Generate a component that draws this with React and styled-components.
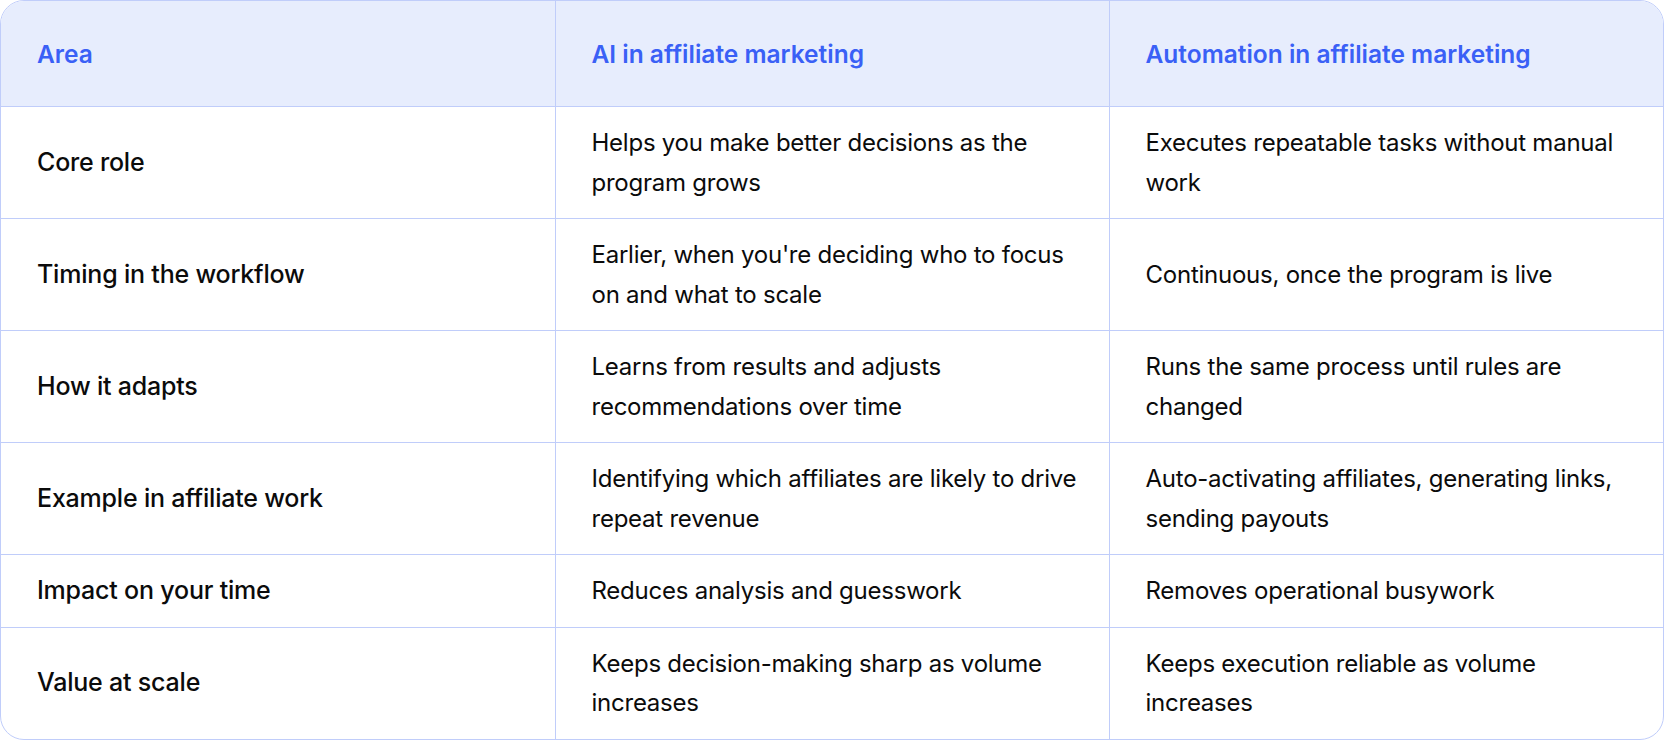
import React from "react";
import styled, { createGlobalStyle } from "styled-components";

const Global = createGlobalStyle`
  html, body { margin: 0; padding: 0; background: #ffffff; }
  body { font-family: Inter, "Noto Sans", sans-serif; -webkit-font-smoothing: antialiased; }
`;

const Frame = styled.div`
  border: 1px solid #c0cdfa;
  border-radius: 24px;
  overflow: hidden;
  background: #ffffff;
`;

const Table = styled.table`
  width: 100%;
  border-collapse: collapse;
  table-layout: fixed;
`;

const HeadRow = styled.tr`
  background: #e7edfd;
`;

const Row = styled.tr`
  border-top: 1px solid #c0cdfa;
`;

const HeadCell = styled.th`
  text-align: left;
  font-weight: 600;
  font-size: 24.5px;
  line-height: 40px;
  color: #3a60f6;
  padding: 33px 28px 32px 36px;
  letter-spacing: 0;
  & + & { border-left: 1px solid #c0cdfa; }
`;

const Cell = styled.td`
  text-align: left;
  vertical-align: middle;
  font-size: ${(p) => (p.$label ? "25px" : "24px")};
  line-height: 39.5px;
  color: #0b0b0b;
  font-weight: ${(p) => (p.$label ? 500 : 400)};
  padding: 16px 28px 16px 36px;
  letter-spacing: ${(p) => (p.$label ? "-0.2px" : "-0.24px")};
  & + & { border-left: 1px solid #c0cdfa; }
`;

const rows = [
  ["Core role", "Helps you make better decisions as the program grows", "Executes repeatable tasks without manual work"],
  ["Timing in the workflow", "Earlier, when you're deciding who to focus on and what to scale", "Continuous, once the program is live"],
  ["How it adapts", "Learns from results and adjusts recommendations over time", "Runs the same process until rules are changed"],
  ["Example in affiliate work", "Identifying which affiliates are likely to drive repeat revenue", "Auto-activating affiliates, generating links, sending payouts"],
  ["Impact on your time", "Reduces analysis and guesswork", "Removes operational busywork"],
  ["Value at scale", "Keeps decision-making sharp as volume increases", "Keeps execution reliable as volume increases"],
];

export default function App() {
  return (
    <>
      <Global />
      <Frame>
        <Table>
          <thead>
            <HeadRow>
              <HeadCell>Area</HeadCell>
              <HeadCell>AI in affiliate marketing</HeadCell>
              <HeadCell>Automation in affiliate marketing</HeadCell>
            </HeadRow>
          </thead>
          <tbody>
            {rows.map((r) => (
              <Row key={r[0]}>
                <Cell $label>{r[0]}</Cell>
                <Cell>{r[1]}</Cell>
                <Cell>{r[2]}</Cell>
              </Row>
            ))}
          </tbody>
        </Table>
      </Frame>
    </>
  );
}
